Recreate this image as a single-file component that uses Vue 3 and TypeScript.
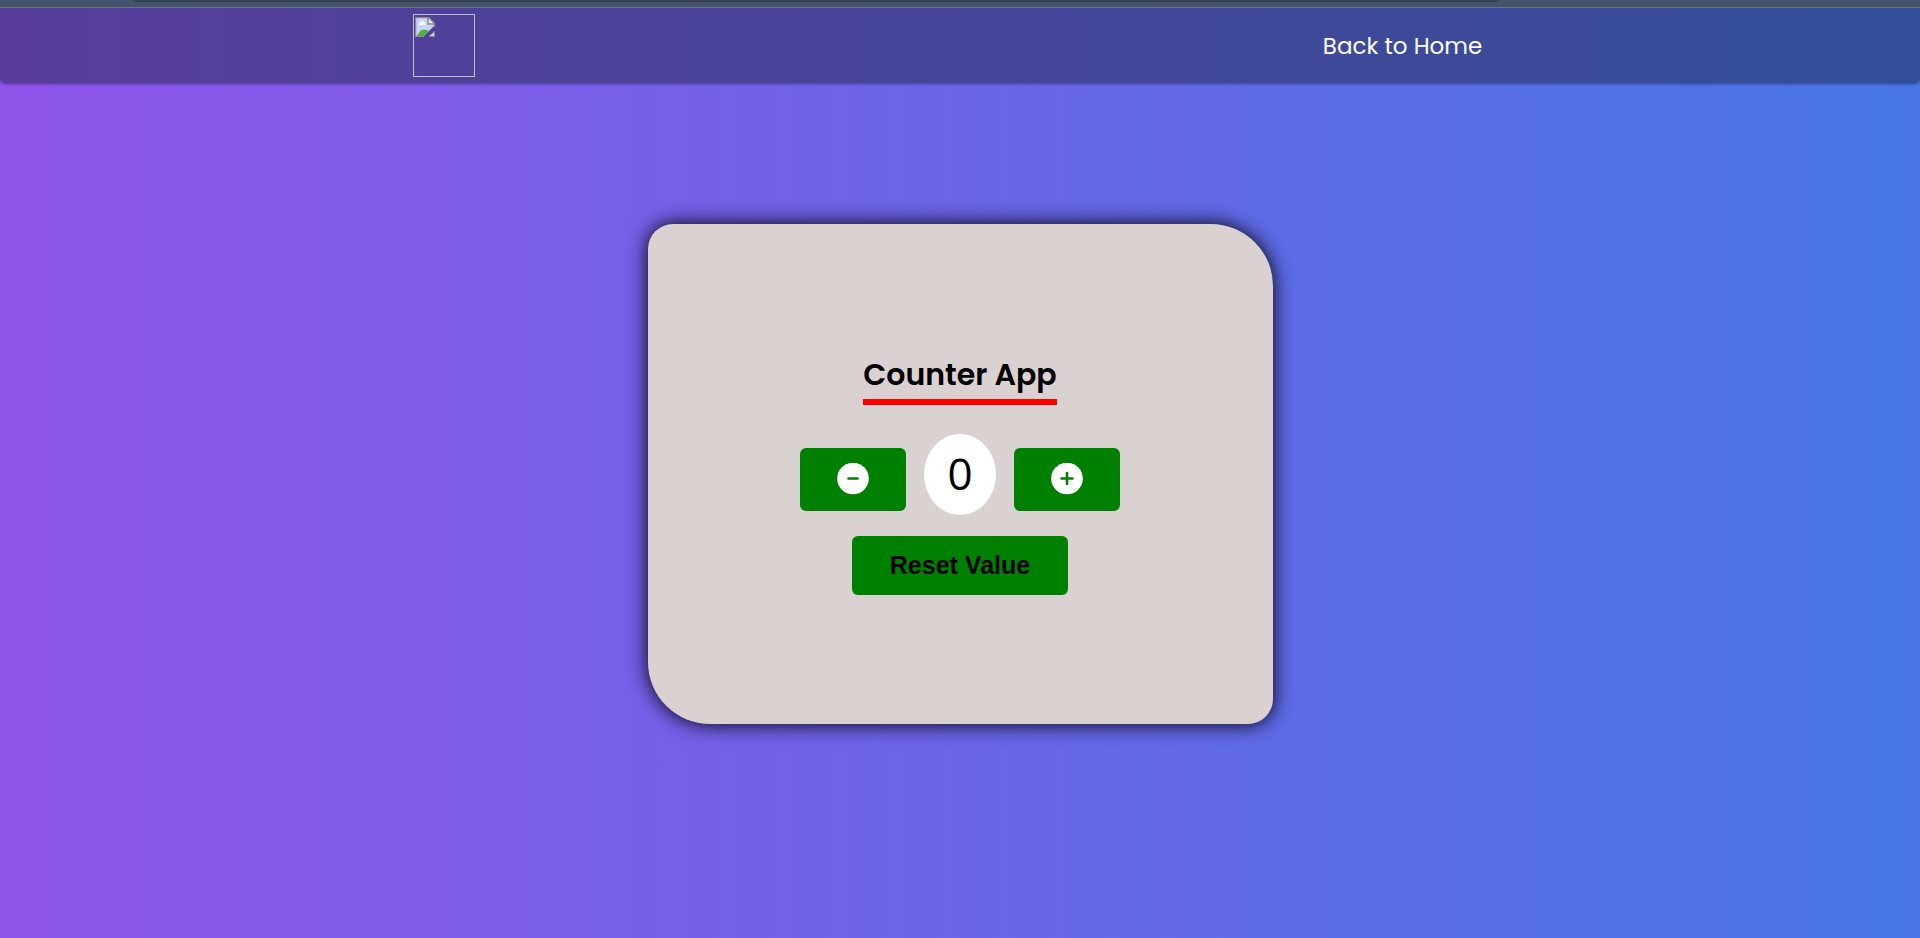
<script setup lang="ts">
import { ref } from 'vue'

const count = ref<number>(0)
</script>

<template>
  <div class="page">
    <div class="strip"><div class="strip-inset"></div></div>
    <header class="navbar">
      <div class="logo" role="img" aria-label="Logo">
        <svg width="20" height="20" viewBox="0 0 20 20" aria-hidden="true">
          <path d="M1 1H13L19 7V9L9 19H1Z" fill="#c5d6f6" />
          <path d="M4 7a2 2 0 0 1 2-2 2.500 2.500 0 0 1 4 1 1.500 1.500 0 0 1 0 2H4Z" fill="#fff" />
          <path d="M2 19C4 14 7 12 10 12.500Q13 13 14 14L9 19Z" fill="#55ad3b" />
          <path d="M19 15V19H14.500Z" fill="#dce4ee" />
          <path d="M19.500 10V6.500L13.500 .5H.5V19.500H9M13 1V7H19M19.500 14V19.500H14" fill="none" stroke="#8b8b8b" stroke-width="1.500" />
          <path d="M14 2V6H18Z" fill="#fff" />
        </svg>
      </div>
      <a class="home-link" href="#">Back to Home</a>
    </header>
    <main class="stage">
      <section class="card">
        <h1 class="title">Counter App</h1>
        <div class="controls">
          <button class="btn step" type="button" aria-label="Decrease" @click="count--">
            <svg width="32" height="32" viewBox="0 0 32 32" aria-hidden="true">
              <circle cx="16" cy="15.500" r="15.800" fill="#fff" />
              <path d="M11.500 15.500h9" stroke="#008000" stroke-width="2.600" stroke-linecap="round" />
            </svg>
          </button>
          <output class="value">{{ count }}</output>
          <button class="btn step" type="button" aria-label="Increase" @click="count++">
            <svg width="32" height="32" viewBox="0 0 32 32" aria-hidden="true">
              <circle cx="16" cy="15.500" r="15.800" fill="#fff" />
              <path d="M10.500 15.500h11M16 10v11" stroke="#008000" stroke-width="2.600" stroke-linecap="round" />
            </svg>
          </button>
        </div>
        <button class="btn reset" type="button" @click="count = 0">Reset Value</button>
      </section>
    </main>
  </div>
</template>

<style>
body {
  margin: 0;
}
</style>

<style scoped>
.page {
  display: flex;
  flex-direction: column;
  min-height: 100vh;
  background: linear-gradient(to right, #8e54e9, #4776e6);
  font-family: Poppins, Inter, sans-serif;
}
.strip {
  height: 7px;
  background: #44546a;
  border-bottom: 1px solid #6f8088;
}
.strip-inset {
  height: 2px;
  margin: 0 22% 0 7%;
  background: #364253;
  border-radius: 0 0 8px 8px;
}
.navbar {
  display: flex;
  align-items: center;
  justify-content: space-between;
  box-sizing: border-box;
  min-height: 75px;
  padding: 0 22.800% 0 21.500%;
  background: rgba(30, 36, 68, 0.48);
  border-radius: 0 0 5px 5px;
  box-shadow: 0 1px 3px rgba(0, 0, 0, 0.4);
}
.logo {
  box-sizing: border-box;
  width: 62px;
  height: 63px;
  padding: 2px 1px;
  border: 1px solid #c0c0c0;
}
.logo svg {
  display: block;
}
.home-link {
  color: #fff;
  font-size: 23px;
  line-height: 36px;
  text-decoration: none;
}
.stage {
  display: flex;
  flex: 1;
  align-items: center;
  justify-content: center;
  padding-bottom: 73px;
}
.card {
  display: flex;
  flex-direction: column;
  align-items: center;
  justify-content: center;
  box-sizing: border-box;
  width: 625px;
  max-width: 100%;
  min-height: 500px;
  padding: 0 24px 4px;
  background: #dad2d0;
  border-radius: 25px 62px;
  box-shadow: 0 0 20px #000;
}
.title {
  margin: 0 0 29px;
  border-bottom: 6px solid #f00;
  color: #000;
  font-size: 30px;
  font-weight: 600;
  line-height: 49px;
}
.controls {
  display: flex;
  align-items: flex-end;
  gap: 18px;
  margin-bottom: 21px;
}
.btn {
  display: flex;
  align-items: center;
  justify-content: center;
  padding: 0;
  border: 0;
  border-radius: 6px;
  background: #008000;
  color: #000;
  cursor: pointer;
}
.step {
  width: 106px;
  height: 63px;
  margin-bottom: 4px;
}
.value {
  width: 72px;
  padding-bottom: 2px;
  border-radius: 50%;
  background: #fff;
  color: #000;
  font-family: "Open Sans", "Noto Sans", sans-serif;
  font-size: 44px;
  line-height: 79px;
  text-align: center;
}
.reset {
  width: 216px;
  height: 59px;
  font: bold 25px/28px "Liberation Sans", Arial, sans-serif;
}
</style>
